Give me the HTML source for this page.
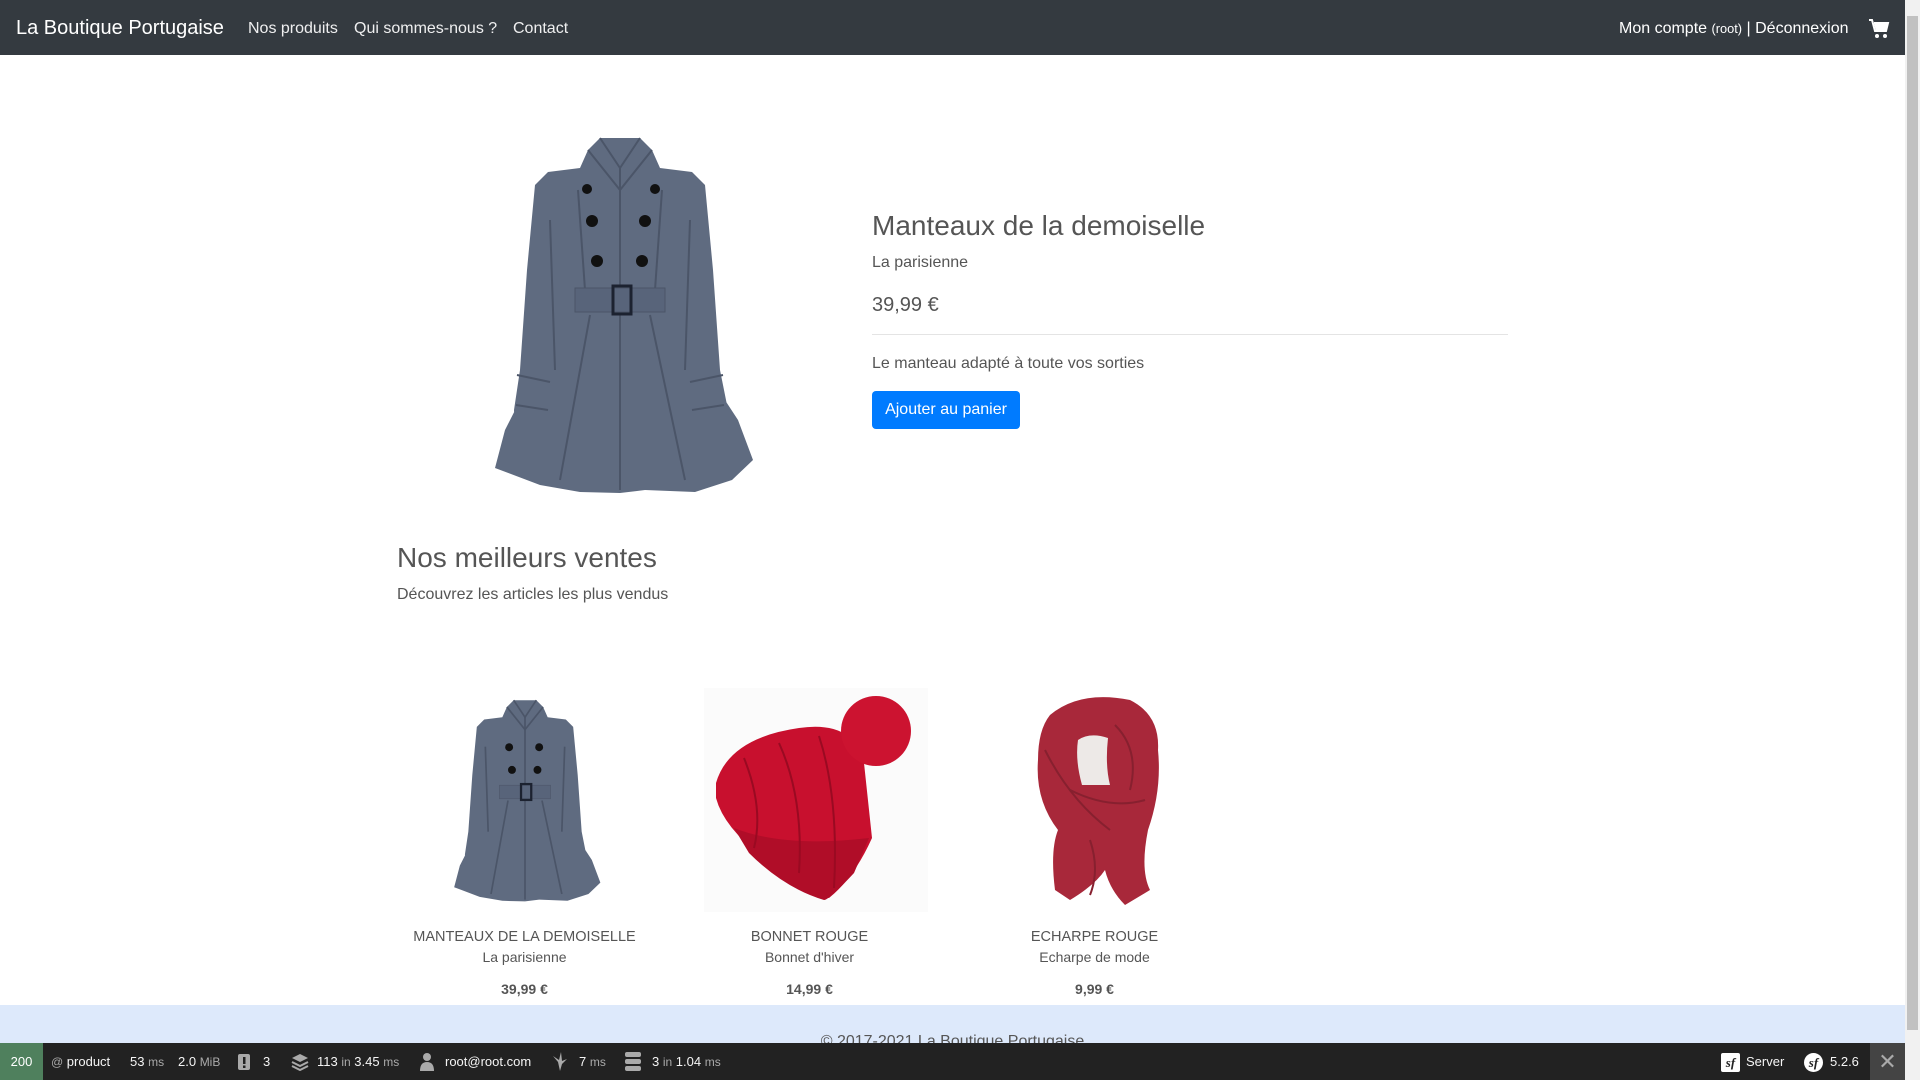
<!DOCTYPE html>
<html><head><meta charset="utf-8"><style>
*{margin:0;padding:0;box-sizing:border-box}
html,body{width:1920px;height:1080px;overflow:hidden;background:#fff;font-family:"Liberation Sans",Arial,sans-serif;color:#555}
.a{position:absolute;white-space:nowrap}
.nav{position:absolute;left:0;top:0;width:1905px;height:55px;background:#343a40}
.nav .a{color:#fff}
.sb{position:absolute;right:0;top:0;width:15px;height:1080px;background:#f1f1f1}
.thumb{position:absolute;right:2px;top:16px;width:11px;height:1014px;background:#c1c1c1}
.c{text-align:center;width:285px}
.tb{position:absolute;left:0;top:1043px;width:1905px;height:37px;background:#222;color:#f5f5f5;font-size:13px}
.tb .a{top:11px}
.u{color:#aaa;font-size:12px}
</style></head><body>
<div class="nav">
<div class="a" style="left:16px;top:17px;font-size:20px">La Boutique Portugaise</div>
<div class="a" style="left:248px;top:20px;font-size:16px;color:rgba(255,255,255,.92)">Nos produits</div>
<div class="a" style="left:354px;top:20px;font-size:16px;color:rgba(255,255,255,.92)">Qui sommes-nous ?</div>
<div class="a" style="left:513px;top:20px;font-size:16px;color:rgba(255,255,255,.92)">Contact</div>
<div class="a" style="left:1619px;top:20px;font-size:16px">Mon compte <span style="font-size:12.8px">(root)</span> | Déconnexion</div>
<svg class="a" style="left:1868px;top:18px" width="22" height="22" viewBox="0 0 22 22"><path d="M1 2h3l3 11h11l2-8H6" fill="none" stroke="#fff" stroke-width="2"/><path d="M6 6h14l-2 7H8z" fill="#fff"/><circle cx="9" cy="18" r="2" fill="#fff"/><circle cx="17" cy="18" r="2" fill="#fff"/></svg>
</div>
<div class="sb"><div class="thumb"></div></div>

<!-- main coat -->
<svg class="a" style="left:470px;top:120px" width="300" height="390" viewBox="0 0 300 390">
<path fill="#5f6b80" d="M118 30 L130 18 L170 18 L182 30 L190 48 L222 52 L235 65 L243 150 L250 250 L258 290 L256 320 L232 325 L228 285 L225 215 L232 245 L268 300 L283 340 L262 360 L225 372 L175 370 L150 373 L110 372 L70 365 L25 348 L35 310 L68 245 L75 215 L72 285 L68 325 L45 320 L44 290 L50 250 L57 150 L65 65 L78 52 L110 48 Z"/>
<g fill="none" stroke="#4b5568" stroke-width="2">
<path d="M130 18 L150 48 L170 18"/><path d="M118 30 L150 70 L182 30"/>
<path d="M150 48 L150 370"/><path d="M108 70 L115 170"/><path d="M192 70 L185 170"/>
<path d="M120 195 L90 360"/><path d="M180 195 L215 360"/>
<path d="M80 100 L85 250 M220 100 L215 250"/>
<path d="M47 255 L80 262 M46 285 L78 290 M253 255 L220 262 M254 285 L222 290"/>
</g>
<rect x="105" y="168" width="90" height="24" fill="#58647a" stroke="#4b5568"/>
<rect x="143" y="166" width="18" height="28" fill="none" stroke="#1c2230" stroke-width="3"/>
<g fill="#111"><circle cx="122" cy="101" r="6"/><circle cx="175" cy="101" r="6"/><circle cx="127" cy="141" r="6"/><circle cx="172" cy="141" r="6"/><circle cx="117" cy="69" r="5"/><circle cx="185" cy="69" r="5"/></g>
</svg>

<div class="a" style="left:872px;top:210px;font-size:28px;color:#555">Manteaux de la demoiselle</div>
<div class="a" style="left:872px;top:254px;font-size:16px">La parisienne</div>
<div class="a" style="left:872px;top:294px;font-size:20px">39,99 €</div>
<div class="a" style="left:872px;top:334px;width:636px;height:1px;background:#e4e4e4"></div>
<div class="a" style="left:872px;top:355px;font-size:16px">Le manteau adapté à toute vos sorties</div>
<div class="a" style="left:872px;top:391px;width:148px;height:38px;background:#007bff;border-radius:4px;color:#fff;font-size:16px;line-height:38px;text-align:center">Ajouter au panier</div>

<div class="a" style="left:397px;top:542px;font-size:28px">Nos meilleurs ventes</div>
<div class="a" style="left:397px;top:586px;font-size:16px">Découvrez les articles les plus vendus</div>

<!-- small coat -->
<svg class="a" style="left:440px;top:690px" width="170" height="221" viewBox="0 0 300 390">
<path fill="#5f6b80" d="M118 30 L130 18 L170 18 L182 30 L190 48 L222 52 L235 65 L243 150 L250 250 L258 290 L256 320 L232 325 L228 285 L225 215 L232 245 L268 300 L283 340 L262 360 L225 372 L175 370 L150 373 L110 372 L70 365 L25 348 L35 310 L68 245 L75 215 L72 285 L68 325 L45 320 L44 290 L50 250 L57 150 L65 65 L78 52 L110 48 Z"/>
<g fill="none" stroke="#4b5568" stroke-width="3"><path d="M130 18 L150 48 L170 18"/><path d="M118 30 L150 70 L182 30"/><path d="M150 48 L150 370"/><path d="M120 195 L90 360"/><path d="M180 195 L215 360"/><path d="M80 100 L85 250 M220 100 L215 250"/></g>
<rect x="105" y="168" width="90" height="24" fill="#58647a" stroke="#4b5568"/>
<rect x="143" y="166" width="18" height="28" fill="none" stroke="#1c2230" stroke-width="4"/>
<g fill="#111"><circle cx="122" cy="101" r="7"/><circle cx="175" cy="101" r="7"/><circle cx="127" cy="141" r="7"/><circle cx="172" cy="141" r="7"/></g>
</svg>

<!-- bonnet -->
<div class="a" style="left:704px;top:688px;width:224px;height:224px;background:#fbfbfb"></div>
<svg class="a" style="left:704px;top:688px" width="224" height="224" viewBox="0 0 224 224">
<path fill="#c8102e" d="M12 95 Q25 50 95 40 Q150 32 160 75 L168 150 Q150 190 125 210 Q90 200 60 170 Q20 140 12 110 Z"/>
<path fill="#b00d28" d="M30 140 Q80 160 165 150 L150 185 Q125 212 120 212 Q80 200 45 165 Z"/>
<g stroke="#9a0a22" stroke-width="2" fill="none"><path d="M40 70 Q60 120 50 160"/><path d="M75 55 Q100 110 95 185"/><path d="M115 48 Q135 110 130 200"/></g>
<circle cx="172" cy="43" r="35" fill="#cc1330"/>
</svg>

<!-- scarf -->
<svg class="a" style="left:1030px;top:690px" width="135" height="220" viewBox="0 0 135 220">
<path fill="#a8283a" d="M20 25 Q50 0 100 10 Q130 25 128 60 Q132 100 118 140 Q110 180 120 200 L95 215 Q80 200 75 180 Q65 195 40 210 L25 200 Q20 160 28 140 Q5 110 8 70 Q8 40 20 25 Z"/>
<path fill="#ede9e7" d="M48 50 Q60 42 78 48 Q75 75 80 95 L52 95 Q45 70 48 50 Z"/>
<g stroke="#87202f" stroke-width="2" fill="none"><path d="M15 60 Q40 110 80 140"/><path d="M40 100 Q80 120 115 110"/><path d="M85 35 Q110 60 100 100"/><path d="M60 150 Q70 180 60 205"/></g>
</svg>

<div class="a c" style="left:382px;top:929px;font-size:14.5px">MANTEAUX DE LA DEMOISELLE</div>
<div class="a c" style="left:382px;top:949px;font-size:14px">La parisienne</div>
<div class="a c" style="left:382px;top:981px;font-size:14px;font-weight:bold">39,99 €</div>
<div class="a c" style="left:667px;top:929px;font-size:14.5px">BONNET ROUGE</div>
<div class="a c" style="left:667px;top:949px;font-size:14px">Bonnet d'hiver</div>
<div class="a c" style="left:667px;top:981px;font-size:14px;font-weight:bold">14,99 €</div>
<div class="a c" style="left:952px;top:929px;font-size:14.5px">ECHARPE ROUGE</div>
<div class="a c" style="left:952px;top:949px;font-size:14px">Echarpe de mode</div>
<div class="a c" style="left:952px;top:981px;font-size:14px;font-weight:bold">9,99 €</div>

<div class="a" style="left:0;top:1005px;width:1905px;height:38px;background:#dde9fb"></div>
<div class="a" style="left:0;top:1033px;width:1905px;text-align:center;font-size:16px">© 2017-2021 La Boutique Portugaise</div>

<div class="tb">
<div class="a" style="left:0;top:0;width:43px;height:37px;background:#4f805d;color:#fff;text-align:center;line-height:37px;font-size:13px">200</div>
<div class="a" style="left:51px"><span class="u">@</span> product</div>
<div class="a" style="left:130px">53 <span class="u">ms</span></div>
<div class="a" style="left:178px">2.0 <span class="u">MiB</span></div>
<svg class="a" style="left:237px;top:10px" width="14" height="18" viewBox="0 0 14 18"><rect x="1" y="1" width="12" height="16" rx="2" fill="#aaa"/><rect x="6" y="4" width="2.5" height="7" fill="#222"/><rect x="6" y="12.5" width="2.5" height="2.5" fill="#222"/></svg>
<div class="a" style="left:263px">3</div>
<svg class="a" style="left:291px;top:10px" width="18" height="18" viewBox="0 0 18 18"><path d="M9 1L17 5L9 9L1 5Z" fill="#aaa"/><path d="M1 9L9 13L17 9M1 13L9 17L17 13" stroke="#aaa" stroke-width="2" fill="none"/></svg>
<div class="a" style="left:317px">113 <span class="u">in</span> 3.45 <span class="u">ms</span></div>
<svg class="a" style="left:419px;top:9px" width="16" height="19" viewBox="0 0 16 19"><circle cx="8" cy="5" r="4" fill="#aaa"/><path d="M1 19 Q1 10 8 10 Q15 10 15 19Z" fill="#aaa"/></svg>
<div class="a" style="left:445px">root@root.com</div>
<svg class="a" style="left:553px;top:9px" width="14" height="19" viewBox="0 0 14 19"><path d="M7 19 L5 10 L0 4 L6 8 L8 0 L9 9 L14 7 L9 12 Z" fill="#aaa"/></svg>
<div class="a" style="left:579px">7 <span class="u">ms</span></div>
<svg class="a" style="left:625px;top:9px" width="16" height="19" viewBox="0 0 16 19"><rect x="0" y="0" width="16" height="5" rx="2" fill="#aaa"/><rect x="0" y="7" width="16" height="5" rx="2" fill="#aaa"/><rect x="0" y="14" width="16" height="5" rx="2" fill="#aaa"/></svg>
<div class="a" style="left:652px">3 <span class="u">in</span> 1.04 <span class="u">ms</span></div>
<div class="a" style="left:1721px;top:10px;width:19px;height:19px;background:#fff;border-radius:2px;color:#222;font:italic bold 13px 'Liberation Serif',serif;text-align:center;line-height:19px">sf</div>
<div class="a" style="left:1746px">Server</div>
<div class="a" style="left:1804px;top:10px;width:19px;height:19px;background:#fff;border-radius:50%;color:#222;font:italic bold 13px 'Liberation Serif',serif;text-align:center;line-height:19px">sf</div>
<div class="a" style="left:1830px">5.2.6</div>
<div class="a" style="left:1870px;top:0;width:35px;height:37px;background:#444;color:#aaa;text-align:center;line-height:37px;font-size:22px">✕</div>
</div>
</body></html>
